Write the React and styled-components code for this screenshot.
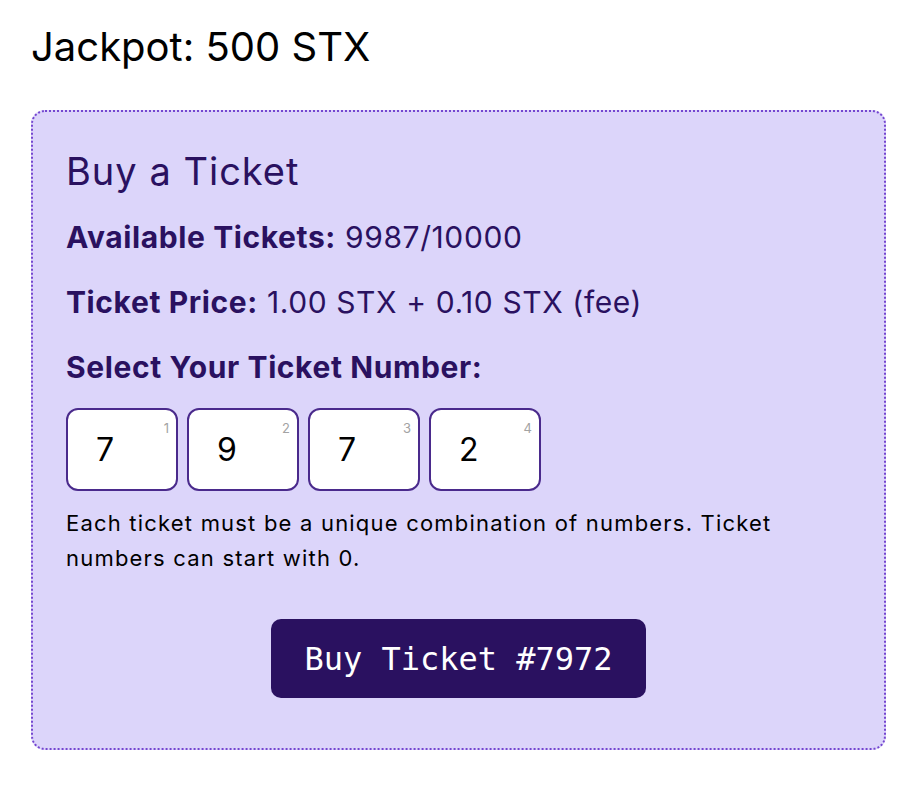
import styled, { createGlobalStyle } from "styled-components";

const GlobalStyle = createGlobalStyle`
    body {
        margin: 0;
        background: #ffffff;
        font-family: "Inter", "Noto Sans", sans-serif;
    }
`;

const Page = styled.div`
    padding: 23px 32px 30px 31px;
`;

const Jackpot = styled.h1`
    margin: 0 0 39px;
    font-size: 40px;
    font-weight: 400;
    line-height: 48px;
    color: #000;
`;

const Card = styled.section`
    border: 2px dotted #7446d0;
    border-radius: 14px;
    background: #dcd5fa;
    padding: 36px 33px 50px;
    color: #2a1160;
`;

const Title = styled.h2`
    margin: 0 0 23px;
    font-size: 38px;
    font-weight: 400;
    line-height: 46px;
    letter-spacing: 1px;
`;

const Line = styled.p`
    margin: 0 0 25px;
    font-size: 30px;
    line-height: 40px;
    letter-spacing: 0.6px;

    strong {
        font-weight: 700;
    }
`;

const Digits = styled.div`
    display: flex;
    gap: 9px;
    margin-top: -4px;
`;

const DigitBox = styled.div`
    position: relative;
    width: 112px;
    height: 83px;
    box-sizing: border-box;
    border: 2px solid #4a2a8c;
    border-radius: 12px;
    background: #fff;
    display: flex;
    align-items: center;
    padding-left: 28px;
    font-size: 32px;
    color: #000;
`;

const Index = styled.span`
    position: absolute;
    top: 12px;
    right: 7px;
    font-size: 13px;
    line-height: 13px;
    color: #a3a3a3;
`;

const Hint = styled.p`
    margin: 15px 0 43px;
    font-size: 22px;
    line-height: 35px;
    letter-spacing: 1.2px;
    color: #000;
`;

const Actions = styled.div`
    display: flex;
    justify-content: center;
`;

const BuyButton = styled.button`
    background: #2a1160;
    color: #fff;
    border: none;
    border-radius: 10px;
    height: 79px;
    padding: 0 33px;
    font-family: "DejaVu Sans Mono", "Liberation Mono", monospace;
    font-size: 32px;
    cursor: pointer;
`;

const digits = ["7", "9", "7", "2"];

export default function App() {
    return (
        <>
            <GlobalStyle />
            <Page>
                <Jackpot>Jackpot: 500 STX</Jackpot>
                <Card>
                    <Title>Buy a Ticket</Title>
                    <Line><strong>Available Tickets:</strong> 9987/10000</Line>
                    <Line><strong>Ticket Price:</strong> 1.00 STX + 0.10 STX (fee)</Line>
                    <Line><strong>Select Your Ticket Number:</strong></Line>
                    <Digits>
                        {digits.map((d, i) => (
                            <DigitBox key={i}>
                                {d}
                                <Index>{i + 1}</Index>
                            </DigitBox>
                        ))}
                    </Digits>
                    <Hint>
                        Each ticket must be a unique combination of numbers. Ticket numbers can start with 0.
                    </Hint>
                    <Actions>
                        <BuyButton>Buy Ticket #{digits.join("")}</BuyButton>
                    </Actions>
                </Card>
            </Page>
        </>
    );
}
